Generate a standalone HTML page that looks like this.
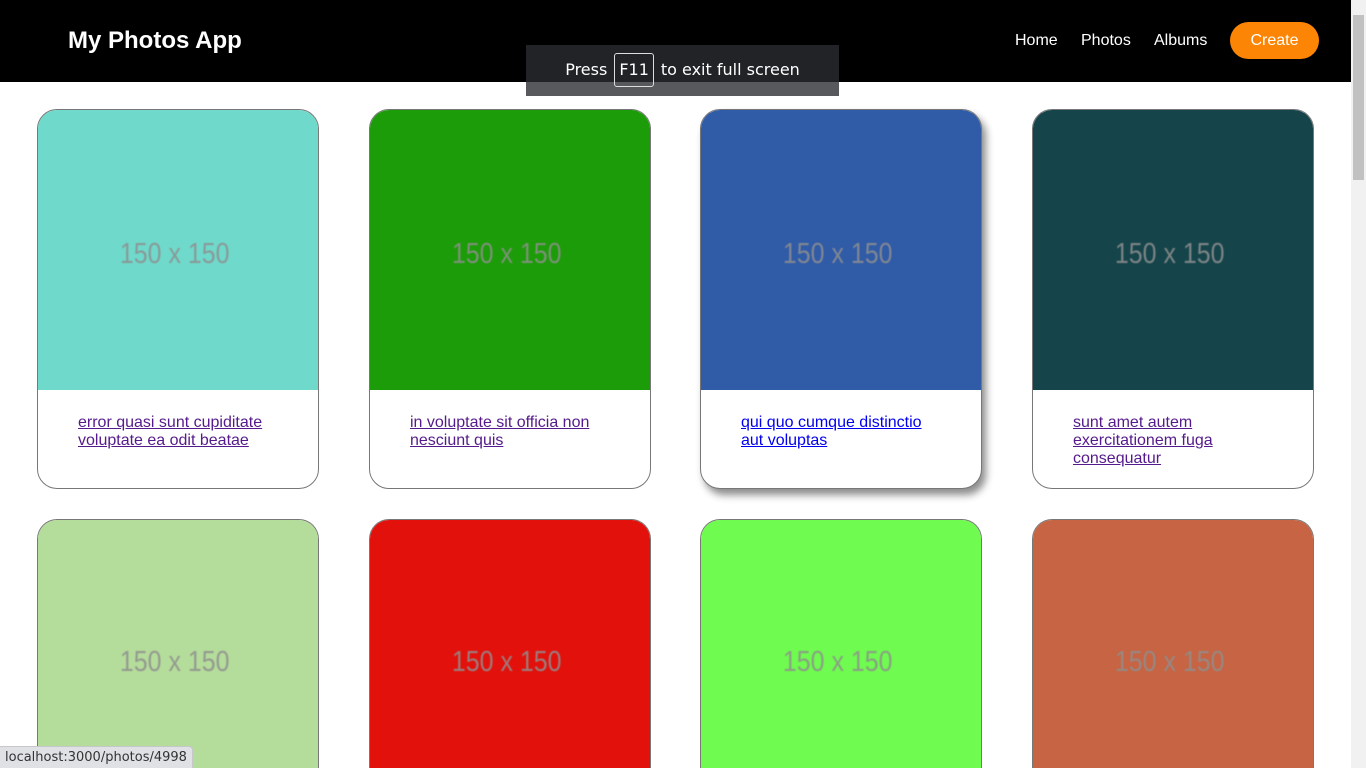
<!DOCTYPE html>
<html><head><meta charset="utf-8"><style>
*{box-sizing:border-box;margin:0;padding:0}
html,body{width:1366px;height:768px;overflow:hidden;background:#fff;font-family:"Liberation Sans",sans-serif}
.wrap{position:relative;width:1366px;height:768px;overflow:hidden}
.hdr{position:absolute;left:0;top:0;width:1351px;height:82px;background:#000}
.logo{position:absolute;left:68px;top:27px;color:#fff;font-weight:bold;font-size:24px}
.nav{position:absolute;top:32px;color:#fff;font-size:16px}
.btn{position:absolute;left:1230px;top:22px;width:89px;height:37px;border-radius:19px;background:#fd8505;color:#fff;font-size:16px;text-align:center;line-height:37px}
.sb{position:absolute;left:1351px;top:0;width:15px;height:768px;background:#f1f1f1}
.thumb{position:absolute;left:1353px;top:15px;width:11px;height:165px;background:#c1c1c1}
.card{position:absolute;width:282px;height:380px;border:1px solid #777;border-radius:20px;overflow:hidden;background:#fff}
.r2{height:249px;border-bottom:none;border-radius:20px 20px 0 0}
.img{height:280px;display:flex;align-items:center;justify-content:center;color:#8f8f8f;font-size:29px;padding-top:8px;padding-right:6px}
.r2 .img{height:248px;align-items:flex-start;padding-top:126px}
.img span{display:inline-block;transform:scaleX(0.86);filter:blur(0.6px);opacity:.85;line-height:33px}
.cap{padding:24px 40px 0 40px;font-size:16px;line-height:18px}
.cap a{color:#551a8b;text-decoration:underline}
.sh{box-shadow:4px 6px 8px rgba(0,0,0,0.45)}
.ov{position:absolute;left:526px;top:45px;width:313px;height:51px;background:rgba(42,44,48,0.79);color:#fff;font-family:"DejaVu Sans",sans-serif;font-size:16px;text-align:center;line-height:50px}
.key{display:inline-block;border:1px solid #ddd;border-radius:3px;padding:0 4px;line-height:32px;margin:0 7px}
.st{position:absolute;left:0;top:746px;height:22px;padding:0 5px;background:#dfe1e5;border:1px solid #c5c7cb;border-left:none;border-bottom:none;border-top-right-radius:4px;font-family:"DejaVu Sans",sans-serif;font-size:13px;color:#333;line-height:21px}
</style></head><body><div class="wrap">
<div class="hdr"></div>
<div class="logo">My Photos App</div>
<div class="nav" style="left:1015px">Home</div>
<div class="nav" style="left:1081px">Photos</div>
<div class="nav" style="left:1154px">Albums</div>
<div class="btn">Create</div>

<div class="card" style="left:37px;top:109px"><div class="img" style="background:#6fd9cb"><span>150 x 150</span></div><div class="cap"><a>error quasi sunt cupiditate voluptate ea odit beatae</a></div></div>
<div class="card" style="left:369px;top:109px"><div class="img" style="background:#1c9c08"><span>150 x 150</span></div><div class="cap"><a>in voluptate sit officia non nesciunt quis</a></div></div>
<div class="card sh" style="left:700px;top:109px"><div class="img" style="background:#305ba7"><span>150 x 150</span></div><div class="cap"><a style="color:#0000ee">qui quo cumque distinctio aut voluptas</a></div></div>
<div class="card" style="left:1032px;top:109px"><div class="img" style="background:#15454b"><span>150 x 150</span></div><div class="cap"><a>sunt amet autem exercitationem fuga consequatur</a></div></div>

<div class="card r2" style="left:37px;top:519px"><div class="img" style="background:#b4dc9a"><span>150 x 150</span></div></div>
<div class="card r2" style="left:369px;top:519px"><div class="img" style="background:#e2110c"><span>150 x 150</span></div></div>
<div class="card r2" style="left:700px;top:519px"><div class="img" style="background:#6ffb4f"><span>150 x 150</span></div></div>
<div class="card r2" style="left:1032px;top:519px"><div class="img" style="background:#c66443"><span>150 x 150</span></div></div>

<div class="ov">Press<span class="key">F11</span>to exit full screen</div>
<div class="sb"></div><div class="thumb"></div>
<div class="st">localhost:3000/photos/4998</div>
</div></body></html>
